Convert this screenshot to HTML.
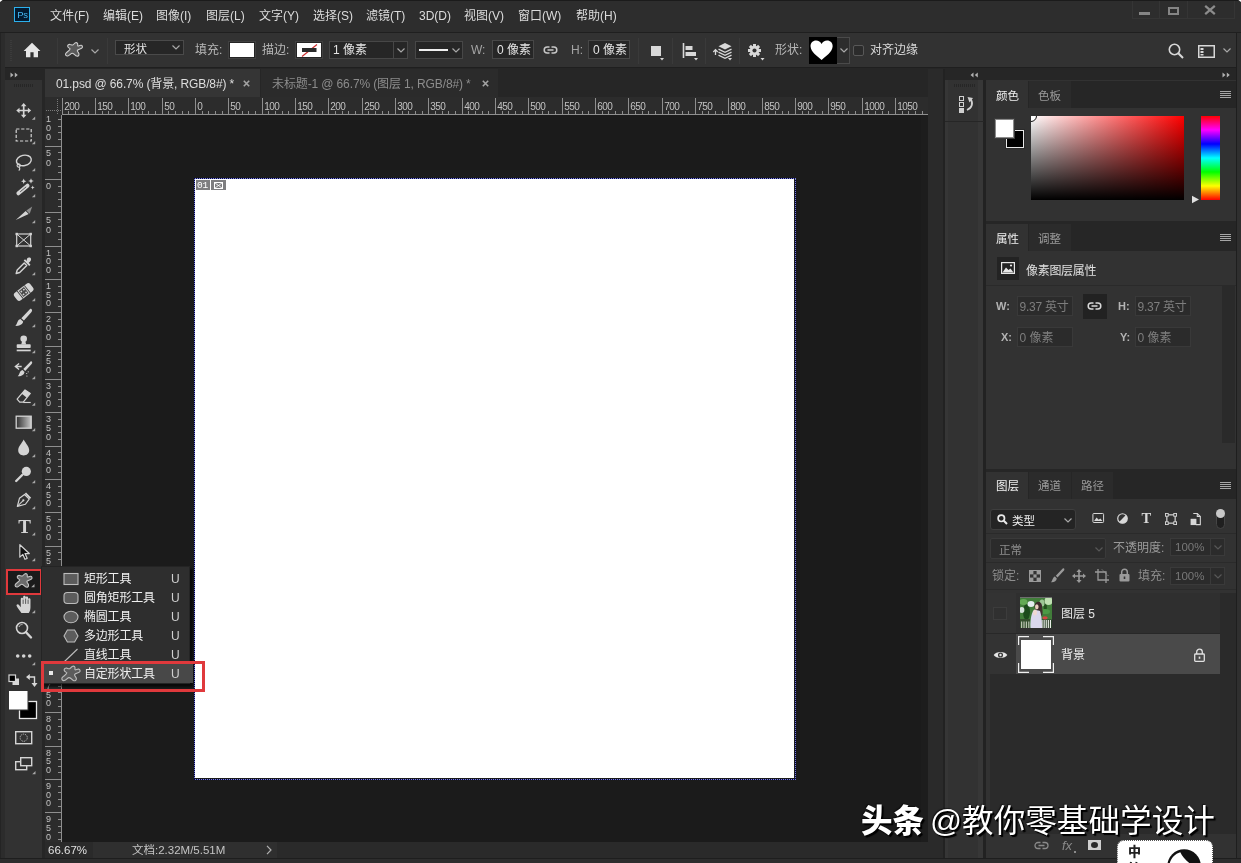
<!DOCTYPE html>
<html lang="zh-CN">
<head>
<meta charset="utf-8">
<title>Photoshop</title>
<style>
*{box-sizing:border-box;margin:0;padding:0}
html,body{width:1241px;height:863px;overflow:hidden;background:#262626}
body{position:relative;font-family:"Liberation Sans","Noto Sans CJK SC",sans-serif;font-size:12px;color:#d6d6d6;line-height:1}
.a{position:absolute}
.t{position:absolute;white-space:nowrap;line-height:16px;height:16px}
svg{position:absolute;overflow:visible}
/* frame */
#menubar{left:0;top:0;width:1241px;height:33px;background:#2d2d2d;border-top:1px solid #1b1b1b;border-bottom:1px solid #1f1f1f}
#optbar{left:5px;top:33px;width:1231px;height:35px;background:#323232;border-bottom:1px solid #1f1f1f}
#leftedge{left:0;top:33px;width:5px;height:830px;background:#2c2c2c;border-left:1px solid #242424}
#rightedge{left:1236px;top:33px;width:5px;height:830px;background:#2f2f2f;border-left:1px solid #1e1e1e}
#bottomedge{left:0;top:858px;width:1241px;height:5px;background:#2d2d2d;border-top:1px solid #1e1e1e}
.menu{top:8px;color:#dcdcdc}
</style>
</head>
<body>
<div id="root" class="a" style="left:0;top:0;width:1241px;height:863px;overflow:hidden;will-change:transform">
<!-- ===== window frame ===== -->
<div class="a" id="menubar"></div>
<div class="a" id="leftedge"></div>
<div class="a" id="rightedge"></div>
<div class="a" id="optbar"></div>
<div class="a" id="bottomedge"></div>
<!-- menubar content -->
<!-- Ps logo -->
<div class="a" style="left:14px;top:7px;width:16px;height:15px;background:#021a30;border:1px solid #2cb0ec"></div>
<div class="t" style="left:17.300px;top:7px;font-size:9.500px;line-height:15px;height:15px;color:#45b4ee;letter-spacing:-0.500px">Ps</div>
<svg style="left:0;top:0" width="4" height="4" viewBox="0 0 4 4"><path d="M0 0 H2.600 L0 2 Z" fill="#fff"/></svg>
<svg style="left:1237px;top:0" width="4" height="4" viewBox="0 0 4 4"><path d="M4 0 H1.400 L4 2 Z" fill="#fff"/></svg>
<div class="t menu" style="left:50px">文件(F)</div>
<div class="t menu" style="left:103px">编辑(E)</div>
<div class="t menu" style="left:156px">图像(I)</div>
<div class="t menu" style="left:206px">图层(L)</div>
<div class="t menu" style="left:259px">文字(Y)</div>
<div class="t menu" style="left:313px">选择(S)</div>
<div class="t menu" style="left:366px">滤镜(T)</div>
<div class="t menu" style="left:419px">3D(D)</div>
<div class="t menu" style="left:464px">视图(V)</div>
<div class="t menu" style="left:518px">窗口(W)</div>
<div class="t menu" style="left:576px">帮助(H)</div>
<!-- window controls -->
<div class="a" style="left:1132px;top:1px;width:103px;height:18px;border:1px solid #353535;border-top:none"></div>
<div class="a" style="left:1159px;top:1px;width:1px;height:18px;background:#353535"></div>
<div class="a" style="left:1187px;top:1px;width:1px;height:18px;background:#353535"></div>
<div class="a" style="left:1139px;top:12px;width:11px;height:3px;background:#858585"></div>
<div class="a" style="left:1168px;top:7px;width:11px;height:8px;border:2px solid #858585"></div>
<svg style="left:1204px;top:5px" width="12" height="10" viewBox="0 0 12 10"><path d="M1.2 0.8 L10.8 9.2 M10.8 0.8 L1.2 9.2" stroke="#8c8c8c" stroke-width="2.2" fill="none"/></svg>

<!-- options bar content -->
<!-- gripper -->
<div class="a" style="left:10px;top:40px;width:2px;height:22px;background:repeating-linear-gradient(to bottom,#3b3b3b 0 1px,transparent 1px 2px)"></div>
<!-- home -->
<svg style="left:23px;top:42px" width="18" height="16" viewBox="0 0 18 16"><path d="M9 0.800 L0.600 9 H3 V15.300 H7.400 V10.300 H10.600 V15.300 H15 V9 H17.400 Z" fill="#e6e6e6"/></svg>
<div class="a" style="left:57px;top:38px;width:1px;height:26px;background:#3a3a3a"></div>
<!-- custom shape icon -->
<svg style="left:64px;top:41px" width="21" height="17" viewBox="0 0 21 17"><path id="blob" transform="translate(10.2,8.4) scale(0.88) translate(-10.2,-8.4)" d="M5.6 7.7 C4.6 6.8 3 6.4 2.8 4.8 C2.6 3.2 4.2 2.4 5.6 2.8 C6.8 3.1 7.6 3.6 8.6 3.4 C9.8 3.1 10.2 1.2 11.8 0.8 C13.6 0.4 14.4 1.8 14.2 3 C14.1 3.8 13.9 4.2 14.4 4.5 C15.2 4.9 16.6 3.4 18.2 3.8 C19.8 4.2 20 6.2 18.8 7 C17.4 7.9 14.6 8.2 13.8 9.5 C13.2 10.6 15.2 11.6 15.6 13.4 C16 15.4 14.4 16.4 13 16 C11.2 15.5 10.4 13 8 12.8 C6.4 12.7 5.2 15.4 3 15.8 C1 16.2 -0.2 14.600 0.6 13 C1.6 11 5.4 10 5.6 7.7 Z" fill="#5a5a5a" stroke="#d0d0d0" stroke-width="1.200"/></svg>
<svg style="left:91px;top:49px" width="8" height="5" viewBox="0 0 8 5"><path d="M0.5 0.5 L4 4 L7.5 0.5" stroke="#a8a8a8" stroke-width="1.2" fill="none"/></svg>
<div class="a" style="left:107px;top:38px;width:1px;height:26px;background:#3a3a3a"></div>
<!-- mode dropdown -->
<div class="a" style="left:115px;top:40px;width:69px;height:15px;background:#262626;border:1px solid #4a4a4a"></div>
<div class="t" style="left:124px;top:42px;color:#e4e4e4;line-height:15px;height:15px;font-size:11.500px">形状</div>
<svg style="left:172px;top:45px" width="8" height="5" viewBox="0 0 8 5"><path d="M0.5 0.5 L4 4 L7.5 0.5" stroke="#a8a8a8" stroke-width="1.2" fill="none"/></svg>
<div class="t" style="left:195px;top:42px;color:#b8b8b8">填充:</div>
<div class="a" style="left:228px;top:41px;width:28px;height:18px;background:#fff;border:2px solid #242424;outline:1px solid #404040;outline-offset:-1px"></div>
<div class="t" style="left:262px;top:42px;color:#b8b8b8">描边:</div>
<div class="a" style="left:295px;top:41px;width:28px;height:18px;background:#fff;border:2px solid #242424;outline:1px solid #404040;outline-offset:-1px"></div>
<svg style="left:298px;top:43px" width="23" height="14" viewBox="0 0 23 14"><path d="M4 13.500 L19 1.500" stroke="#cc3030" stroke-width="1.300"/><rect x="4" y="5" width="14.500" height="4" fill="#2a2a2a"/></svg>
<!-- stroke width -->
<div class="a" style="left:329px;top:41px;width:79px;height:18px;background:#262626;border:1px solid #474747"></div>
<div class="a" style="left:393px;top:42px;width:1px;height:16px;background:#474747"></div>
<div class="t" style="left:333px;top:42px;color:#e4e4e4">1 像素</div>
<svg style="left:397px;top:48px" width="8" height="5" viewBox="0 0 8 5"><path d="M0.5 0.5 L4 4 L7.5 0.5" stroke="#a8a8a8" stroke-width="1.2" fill="none"/></svg>
<!-- line style -->
<div class="a" style="left:415px;top:41px;width:48px;height:18px;background:#262626;border:1px solid #474747"></div>
<div class="a" style="left:419px;top:49px;width:29px;height:2px;background:#f0f0f0"></div>
<svg style="left:452px;top:48px" width="8" height="5" viewBox="0 0 8 5"><path d="M0.5 0.5 L4 4 L7.5 0.5" stroke="#a8a8a8" stroke-width="1.2" fill="none"/></svg>
<div class="t" style="left:471px;top:42px;color:#a4a4a4">W:</div>
<div class="a" style="left:492px;top:40px;width:42px;height:19px;background:#262626;border:1px solid #474747"></div>
<div class="t" style="left:497px;top:42px;color:#e4e4e4">0 像素</div>
<svg style="left:543px;top:45px" width="15" height="10" viewBox="0 0 15 10"><path d="M6.5 2 H4.2 A3 3 0 0 0 4.2 8 H6.5 M8.5 2 H10.8 A3 3 0 0 1 10.8 8 H8.5 M4.5 5 H10.5" stroke="#c8c8c8" stroke-width="1.5" fill="none"/></svg>
<div class="t" style="left:571px;top:42px;color:#a4a4a4">H:</div>
<div class="a" style="left:588px;top:40px;width:42px;height:19px;background:#262626;border:1px solid #474747"></div>
<div class="t" style="left:593px;top:42px;color:#e4e4e4">0 像素</div>
<div class="a" style="left:638px;top:38px;width:1px;height:26px;background:#3a3a3a"></div>
<!-- path ops -->
<div class="a" style="left:651px;top:46px;width:10px;height:10px;background:#d8d8d8"></div>
<svg style="left:660px;top:58px" width="4" height="3" viewBox="0 0 4 3"><path d="M0 0 H4 L2 2.6 Z" fill="#d8d8d8"/></svg>
<div class="a" style="left:672px;top:38px;width:1px;height:26px;background:#3a3a3a"></div>
<!-- align -->
<svg style="left:682px;top:43px" width="16" height="18" viewBox="0 0 16 18"><path d="M1.5 0 V15" stroke="#d8d8d8" stroke-width="1.6"/><rect x="3.5" y="3" width="7" height="4" fill="#d8d8d8"/><rect x="3.5" y="9" width="10.5" height="4" fill="#d8d8d8"/><path d="M12 15 H16 L14 17.6 Z" fill="#d8d8d8"/></svg>
<div class="a" style="left:705px;top:38px;width:1px;height:26px;background:#3a3a3a"></div>
<!-- arrange -->
<svg style="left:713px;top:42px" width="20" height="19" viewBox="0 0 20 19"><path d="M2.5 13 V8 M0.3 10 L2.5 7.6 L4.7 10" stroke="#d8d8d8" stroke-width="1.3" fill="none"/><path d="M12 1 L18.5 4.2 L12 7.4 L5.5 4.2 Z" fill="#d8d8d8"/><path d="M5.5 7.2 L12 10.4 L18.5 7.2 M5.5 10.2 L12 13.4 L18.5 10.2 M5.5 13.2 L12 16.4 L18.5 13.2" stroke="#d8d8d8" stroke-width="1.3" fill="none"/><path d="M15 16 H19 L17 18.6 Z" fill="#d8d8d8"/></svg>
<div class="a" style="left:739px;top:38px;width:1px;height:26px;background:#3a3a3a"></div>
<!-- gear -->
<svg style="left:747px;top:43px" width="18" height="18" viewBox="0 0 18 18"><g transform="translate(7.5,7.5) scale(0.930)"><g fill="#d8d8d8"><rect x="-1.6" y="-7" width="3.2" height="14"/><rect x="-1.6" y="-7" width="3.2" height="14" transform="rotate(45)"/><rect x="-1.6" y="-7" width="3.2" height="14" transform="rotate(90)"/><rect x="-1.6" y="-7" width="3.2" height="14" transform="rotate(135)"/><circle r="5"/></g><circle r="2.2" fill="#323232"/></g><path d="M13.5 15 H17.5 L15.5 17.6 Z" fill="#d8d8d8"/></svg>
<div class="t" style="left:775px;top:42px;color:#b8b8b8">形状:</div>
<div class="a" style="left:809px;top:37px;width:41px;height:27px;border:1px solid #4a4a4a;background:#2d2d2d"></div>
<div class="a" style="left:809px;top:37px;width:28px;height:27px;background:#000"></div>
<svg style="left:810.400px;top:39.800px" width="23.200" height="20.600" viewBox="0 0 25 22"><path d="M12.5 21.5 C8 17.5 1 13 0.6 7 C0.3 2.8 3.4 0.4 6.6 0.5 C9.2 0.6 11.4 2 12.5 4.2 C13.6 2 15.8 0.6 18.4 0.5 C21.6 0.4 24.7 2.8 24.4 7 C24 13 17 17.5 12.5 21.5 Z" fill="#fff"/></svg>
<svg style="left:840px;top:48px" width="8" height="5" viewBox="0 0 8 5"><path d="M0.5 0.5 L4 4 L7.5 0.5" stroke="#a8a8a8" stroke-width="1.2" fill="none"/></svg>
<div class="a" style="left:853px;top:45px;width:11px;height:11px;border:1px solid #585858;border-radius:2px;background:#2b2b2b"></div>
<div class="t" style="left:870px;top:42px;color:#d8d8d8">对齐边缘</div>
<!-- search -->
<svg style="left:1168px;top:43px" width="16" height="16" viewBox="0 0 16 16"><circle cx="6.5" cy="6.5" r="5.2" stroke="#d8d8d8" stroke-width="1.6" fill="none"/><path d="M10.3 10.3 L15 15" stroke="#d8d8d8" stroke-width="2"/></svg>
<svg style="left:1198px;top:45px" width="17" height="13" viewBox="0 0 17 13"><rect x="0.75" y="0.75" width="15.5" height="11.5" stroke="#d8d8d8" stroke-width="1.5" fill="none"/><rect x="2.5" y="3" width="3" height="2" fill="#d8d8d8"/><rect x="2.5" y="6" width="3" height="2" fill="#d8d8d8"/><rect x="2.5" y="9" width="3" height="1.5" fill="#d8d8d8"/></svg>
<svg style="left:1223px;top:48px" width="8" height="5" viewBox="0 0 8 5"><path d="M0.5 0.5 L4 4 L7.5 0.5" stroke="#a8a8a8" stroke-width="1.2" fill="none"/></svg>

<!-- toolbar -->
<div class="a" style="left:5px;top:69px;width:37px;height:789px;background:#323232"></div>
<div class="a" style="left:5px;top:69px;width:37px;height:11px;background:#262626"></div>
<svg style="left:10px;top:72px" width="9" height="6" viewBox="0 0 9 6"><path d="M0.5 0.5 L3.5 3 L0.5 5.5 Z M4.8 0.5 L7.8 3 L4.8 5.5 Z" fill="#b0b0b0"/></svg>
<div class="a" style="left:14px;top:84px;width:20px;height:3px;background:repeating-linear-gradient(to right,#262626 0 1px,transparent 1px 2px)"></div>
<!-- selected tool bg + red annotation -->
<div class="a" style="left:6px;top:568.500px;width:36px;height:26px;background:#1b1b1b;border:2.800px solid #e0393c"></div>
<svg style="left:0;top:0" width="45" height="863" viewBox="0 0 45 863">
<g transform="translate(23.7,110.5)"><path transform="scale(0.93)" d="M0 -8 L3 -4.5 H0.9 V-0.9 H4.5 V-3 L8 0 L4.5 3 V0.9 H0.9 V4.5 H3 L0 8 L-3 4.5 H-0.9 V0.9 H-4.5 V3 L-8 0 L-4.5 -3 V-0.9 H-0.9 V-4.5 H-3 Z" fill="#d4d4d4"/><path d="M11.5 6 V9.3 H8.2 Z" fill="#a8a8a8"/></g>
<g transform="translate(23.7,135)"><rect x="-7.5" y="-6" width="15" height="12" fill="none" stroke="#d4d4d4" stroke-width="1.200" stroke-dasharray="3.200 1.800"/><path d="M11.5 6 V9.3 H8.2 Z" fill="#a8a8a8"/></g>
<g transform="translate(23.7,162)"><ellipse cx="0.5" cy="-1.5" rx="7.5" ry="5.2" fill="none" stroke="#d4d4d4" stroke-width="1.4" transform="rotate(-12)"/><circle cx="-5" cy="3.5" r="1.6" fill="none" stroke="#d4d4d4" stroke-width="1.1"/><path d="M-4.5 5 C-3.5 6.5 -4 8 -5 8.5" fill="none" stroke="#d4d4d4" stroke-width="1.2"/><path d="M11.5 6 V9.3 H8.2 Z" fill="#a8a8a8"/></g>
<g transform="translate(23.7,188)"><path d="M-5.300 5.300 L3.800 -2.300" stroke="#d4d4d4" stroke-width="4" stroke-linecap="round"/><path d="M-3.500 3.800 L2.500 -1.200" stroke="#323232" stroke-width="0.800"/><path d="M0 -9.500 L0.800 -7.600 L2.700 -6.800 L0.800 -6 L0 -4.100 L-0.800 -6 L-2.700 -6.800 L-0.800 -7.600 Z M7.300 -9.800 L8.100 -7.800 L10.100 -7 L8.100 -6.200 L7.300 -4.200 L6.500 -6.200 L4.500 -7 L6.500 -7.800 Z M9 -2.500 L9.600 -1.100 L11 -0.500 L9.600 0.100 L9 1.500 L8.400 0.100 L7 -0.500 L8.400 -1.100 Z" fill="#d4d4d4"/><path d="M11.5 6 V9.3 H8.2 Z" fill="#a8a8a8"/></g>
<g transform="translate(23.7,214)"><path d="M-8 6 L2 -3 L5 0 Z" fill="#d4d4d4"/><path d="M2.6 -3.6 L8.5 -7.5 L6 -0.2 Z" fill="#8c8c8c"/><path d="M11.5 6 V9.3 H8.2 Z" fill="#a8a8a8"/></g>
<g transform="translate(23.7,240)"><rect x="-7" y="-6" width="14" height="12" fill="none" stroke="#d4d4d4" stroke-width="1.200"/><path d="M-7 -6 L7 6 M7 -6 L-7 6" stroke="#d4d4d4" stroke-width="1"/><g fill="#d4d4d4"><rect x="-8.200" y="-7.200" width="2.400" height="2.400"/><rect x="5.800" y="-7.200" width="2.400" height="2.400"/><rect x="-8.200" y="4.800" width="2.400" height="2.400"/><rect x="5.800" y="4.800" width="2.400" height="2.400"/></g></g>
<g transform="translate(23.7,266)"><path d="M-7.5 7.5 L-6.5 4 L0.5 -3 L3 -0.5 L-4 6.5 Z" fill="none" stroke="#d4d4d4" stroke-width="1.4" stroke-linejoin="round"/><path d="M0 -5.5 L5.5 0 L6.8 -1.3 L5 -3.2 C8 -5 8 -8 6 -8.5 C4 -9 2.5 -7 3.2 -5 L1.3 -6.8 Z" fill="#d4d4d4"/><path d="M11.5 6 V9.3 H8.2 Z" fill="#a8a8a8"/></g>
<g transform="translate(23.7,292)"><g transform="rotate(-38)"><rect x="-10" y="-4.800" width="20" height="9.600" rx="2.600" fill="#d4d4d4"/><rect x="-5" y="-4.800" width="10" height="9.600" fill="#323232"/><rect x="-4.200" y="-4.800" width="8.400" height="9.600" fill="#d4d4d4"/><rect x="-3.200" y="-3.700" width="6.400" height="7.400" fill="#484848"/><circle cx="-1.600" cy="-1.800" r="0.900" fill="#d4d4d4"/><circle cx="1.600" cy="-1.800" r="0.900" fill="#d4d4d4"/><circle cx="-1.600" cy="1.800" r="0.900" fill="#d4d4d4"/><circle cx="1.600" cy="1.800" r="0.900" fill="#d4d4d4"/></g><path d="M11.5 6 V9.3 H8.2 Z" fill="#a8a8a8"/></g>
<g transform="translate(23.7,318)"><path d="M7.600 -9 C8.900 -8 8.500 -6.800 7.400 -5.600 L0.200 2.600 L-2.400 0.200 L5.200 -7.800 C6 -8.700 6.800 -9.600 7.600 -9 Z" fill="#d4d4d4"/><path d="M-3.300 1 L-0.600 3.600 C-0.800 6.400 -4.400 8.400 -8.400 7.800 C-6.200 6.200 -6.400 1.600 -3.300 1 Z" fill="#d4d4d4"/><path d="M11.5 6 V9.3 H8.2 Z" fill="#a8a8a8"/></g>
<g transform="translate(23.7,344)"><circle cx="0" cy="-5.200" r="3.300" fill="#d4d4d4"/><path d="M-1.600 -3 H1.600 L2.400 0.500 H-2.400 Z" fill="#d4d4d4"/><rect x="-7" y="0.300" width="14" height="3.700" rx="0.800" fill="#d4d4d4"/><rect x="-7" y="5.600" width="14" height="1.700" fill="#d4d4d4"/><path d="M11.5 6 V9.3 H8.2 Z" fill="#a8a8a8"/></g>
<g transform="translate(23.7,370)"><path d="M8 -8.5 C9 -7.5 8.4 -6.6 7.5 -5.6 L1.5 1 L-0.4 -0.9 L6 -7.6 C6.7 -8.4 7.3 -9 8 -8.5 Z" fill="#d4d4d4"/><path d="M-1.2 0 L0.8 2 C0.6 4.5 -2.5 6.8 -6 6.3 C-4 4.8 -4.2 0.6 -1.2 0 Z" fill="#d4d4d4"/><path d="M-8 -3.5 H-2 M-4.6 -6.5 L-8.3 -3.5 L-4.6 -0.5" stroke="#d4d4d4" stroke-width="1.4" fill="none"/><circle cx="3" cy="3.5" r="0.6" fill="#d4d4d4"/><circle cx="4.5" cy="1.8" r="0.6" fill="#d4d4d4"/><circle cx="3.2" cy="6" r="0.6" fill="#d4d4d4"/><path d="M11.5 6 V9.3 H8.2 Z" fill="#a8a8a8"/></g>
<g transform="translate(23.7,396.5)"><g transform="scale(0.880)"><path d="M-7.5 3 L1.5 -7.5 L7.5 -3.5 L-0.5 6.5 H-4.5 Z" fill="none" stroke="#d4d4d4" stroke-width="1.4" stroke-linejoin="round"/><path d="M-2.2 -3.2 L1.5 -7.5 L7.5 -3.5 L3.6 1.4 Z" fill="#d4d4d4"/><path d="M-0.5 6.8 H8" stroke="#d4d4d4" stroke-width="1.3"/></g><path d="M11.5 6 V9.3 H8.2 Z" fill="#a8a8a8"/></g>
<g transform="translate(23.7,422)"><defs><linearGradient id="gg" x1="0" x2="1" y1="0" y2="0"><stop offset="0" stop-color="#303030"/><stop offset="1" stop-color="#c8c8c8"/></linearGradient></defs><rect x="-7.500" y="-5.800" width="15" height="12" fill="url(#gg)" stroke="#d4d4d4" stroke-width="1.300"/><path d="M11.5 6 V9.3 H8.2 Z" fill="#a8a8a8"/></g>
<g transform="translate(23.7,448)"><path d="M0 -8.5 C2 -4.5 5.5 -1.5 5.5 2.3 C5.5 5.5 3 7.5 0 7.5 C-3 7.5 -5.5 5.5 -5.5 2.3 C-5.5 -1.5 -2 -4.5 0 -8.5 Z" fill="#d4d4d4"/><path d="M11.5 6 V9.3 H8.2 Z" fill="#a8a8a8"/></g>
<g transform="translate(23.7,474)"><circle cx="2.600" cy="-2.600" r="4.600" fill="#d4d4d4"/><path d="M-1.5 1 L-7.5 7" stroke="#d4d4d4" stroke-width="2.4" stroke-linecap="round"/><path d="M11.5 6 V9.3 H8.2 Z" fill="#a8a8a8"/></g>
<g transform="translate(23.7,500)"><g transform="scale(0.85)"><path d="M-7.5 7.5 L-5 -2 L1 -6.5 L6.5 -1 L2 5 Z" fill="none" stroke="#d4d4d4" stroke-width="1.4" stroke-linejoin="round"/><path d="M-7 7 L-1 1" stroke="#d4d4d4" stroke-width="1.2"/><circle cx="-0.4" cy="0.4" r="1.3" fill="#d4d4d4"/><path d="M2 -8 L8 -2" stroke="#d4d4d4" stroke-width="2.2"/></g><path d="M11.5 6 V9.3 H8.2 Z" fill="#a8a8a8"/></g>
<g transform="translate(23.7,526.3)"><text x="0.800" y="6.300" text-anchor="middle" font-family="Liberation Serif, serif" font-weight="bold" font-size="19" fill="#d4d4d4">T</text><path d="M11.5 6 V9.3 H8.2 Z" fill="#a8a8a8"/></g>
<g transform="translate(23.7,552)"><g transform="scale(0.86)"><path d="M-4.5 -8.5 V6 L-1 2.8 L1.5 8.5 L4 7.4 L1.5 1.8 H6.5 Z" fill="#111" stroke="#d4d4d4" stroke-width="1.4" stroke-linejoin="round"/></g><path d="M11.5 6 V9.3 H8.2 Z" fill="#a8a8a8"/></g>
<g transform="translate(14.800,573) scale(0.880)"><path d="M5.6 7.7 C4.6 6.8 3 6.4 2.8 4.8 C2.6 3.2 4.2 2.4 5.6 2.8 C6.8 3.1 7.6 3.6 8.6 3.4 C9.8 3.1 10.2 1.2 11.8 0.8 C13.6 0.4 14.4 1.8 14.2 3 C14.1 3.8 13.9 4.2 14.4 4.5 C15.2 4.9 16.6 3.4 18.2 3.8 C19.8 4.2 20 6.2 18.8 7 C17.4 7.9 14.6 8.2 13.8 9.5 C13.2 10.6 15.2 11.6 15.6 13.4 C16 15.4 14.4 16.4 13 16 C11.2 15.5 10.4 13 8 12.8 C6.4 12.7 5.2 15.4 3 15.8 C1 16.2 -0.2 14.600 0.6 13 C1.6 11 5.4 10 5.6 7.7 Z" fill="#6a6a6a" stroke="#c8c8c8" stroke-width="1.2"/></g>
<path d="M34.5 584 V587.3 H31.2 Z" fill="#a8a8a8"/>
<!-- hand -->
<g transform="translate(25.3,605) scale(1.08)"><path d="M-3.6 7.5 C-5 5.5 -7 3 -8 1 C-8.6 -0.4 -7 -1.4 -6 -0.2 L-4.2 2 V-5.5 C-4.2 -7.2 -2 -7.2 -2 -5.5 V-7.3 C-2 -9 0.3 -9 0.3 -7.3 V-6.5 C0.3 -8.2 2.6 -8.2 2.6 -6.5 V-5 C2.6 -6.6 4.8 -6.6 4.8 -5 V2 C4.8 4.5 4 6 3.2 7.5 Z" fill="#d4d4d4"/><path d="M-2 -5 V-1 M0.3 -6 V-1 M2.6 -5 V-1" stroke="#323232" stroke-width="0.7"/></g><g transform="translate(23.7,604)"><path d="M11.5 6 V9.3 H8.2 Z" fill="#a8a8a8"/></g>
<!-- zoom -->
<g transform="translate(23.5,630)"><circle cx="-1.5" cy="-2" r="5.5" fill="none" stroke="#d4d4d4" stroke-width="1.6"/><path d="M2.5 2.2 L7.5 7.5" stroke="#d4d4d4" stroke-width="2.4" stroke-linecap="round"/><path d="M-4.5 -3 C-4 -4.8 -2.5 -5.6 -1 -5.4" stroke="#d4d4d4" stroke-width="0.9" fill="none"/></g>
<!-- dots -->
<g transform="translate(23.7,656)"><circle cx="-6" cy="0" r="1.8" fill="#d4d4d4"/><circle cx="0" cy="0" r="1.8" fill="#d4d4d4"/><circle cx="6" cy="0" r="1.8" fill="#d4d4d4"/><path d="M11.5 6 V9.3 H8.2 Z" fill="#a8a8a8"/></g>
<!-- default colors mini -->
<rect x="12.5" y="678.5" width="6.5" height="6.5" fill="#d8d8d8"/><rect x="9" y="675" width="6.5" height="6.5" fill="#000" stroke="#d8d8d8" stroke-width="1.2"/>
<!-- swap arrows -->
<path d="M29 677 H34.5 V684" stroke="#d8d8d8" stroke-width="1.4" fill="none"/><path d="M29.8 674 L26 677 L29.8 680 Z M31.5 683 L34.5 687 L37.5 683 Z" fill="#d8d8d8"/>
<!-- fg/bg -->
<rect x="19.5" y="701.500" width="17" height="17" fill="#000" stroke="#e8e8e8" stroke-width="1.3"/>
<rect x="8.5" y="690.5" width="19.500" height="19.500" fill="#fff" stroke="#323232" stroke-width="1"/>
<!-- quick mask -->
<rect x="15.7" y="731.7" width="16" height="12" fill="none" stroke="#d4d4d4" stroke-width="1.4"/><circle cx="23.700" cy="737.700" r="3.600" fill="none" stroke="#d4d4d4" stroke-width="1" stroke-dasharray="1 1"/>
<!-- screen mode -->
<rect x="15.7" y="761.700" width="11" height="8" fill="none" stroke="#d4d4d4" stroke-width="1.4"/><rect x="20.700" y="757.700" width="11" height="8" fill="#323232" stroke="#d4d4d4" stroke-width="1.4"/><path d="M35.5 771 V774.3 H32.2 Z" fill="#a8a8a8"/>
</svg>
<!-- document area -->
<!-- tab bar -->
<div class="a" style="left:45px;top:69px;width:883px;height:28px;background:#262626"></div>
<div class="a" style="left:45px;top:69px;width:215px;height:28px;background:#353535"></div>
<div class="a" style="left:261px;top:69px;width:237px;height:28px;background:#2b2b2b"></div>
<div class="t" style="left:56px;top:76px;color:#dedede;letter-spacing:-0.12px">01.psd @ 66.7% (背景, RGB/8#) *</div>
<svg style="left:243px;top:80px" width="7" height="7" viewBox="0 0 7 7"><path d="M0.8 0.8 L6.2 6.2 M6.2 0.8 L0.8 6.2" stroke="#a4a4a4" stroke-width="1.6"/></svg>
<div class="t" style="left:272px;top:76px;color:#8c8c8c;letter-spacing:-0.12px">未标题-1 @ 66.7% (图层 1, RGB/8#) *</div>
<svg style="left:482px;top:80px" width="7" height="7" viewBox="0 0 7 7"><path d="M0.8 0.8 L6.2 6.2 M6.2 0.8 L0.8 6.2" stroke="#a4a4a4" stroke-width="1.6"/></svg>
<!-- canvas bg -->
<div class="a" style="left:45px;top:97px;width:883px;height:745px;background:#1b1b1b"></div>
<div class="a" style="left:921px;top:115px;width:7px;height:727px;background:#1d1d1d"></div>
<!-- rulers -->
<div class="a" style="left:45px;top:97px;width:883px;height:18px;background:#2c2c2c"></div>
<div class="a" style="left:45px;top:97px;width:17px;height:745px;background:#2c2c2c"></div>
<svg style="left:0;top:0;font-family:'Liberation Sans',sans-serif;font-size:9px" width="930" height="863" viewBox="0 0 930 863" fill="#c2c2c2">
<path d="M62 114.5 H928 M61.5 115 V842" stroke="#8e8e8e" stroke-width="1" fill="none"/>
<path d="M62.5 98 V115 M68.5 111 V114 M75.5 111 V114 M82.5 111 V114 M88.5 111 V114 M95.5 98 V115 M102.5 111 V114 M108.5 111 V114 M115.5 111 V114 M122.5 111 V114 M128.5 98 V115 M135.5 111 V114 M142.5 111 V114 M148.5 111 V114 M155.5 111 V114 M162.5 98 V115 M168.5 111 V114 M175.5 111 V114 M182.5 111 V114 M188.5 111 V114 M195.5 98 V115 M202.5 111 V114 M208.5 111 V114 M215.5 111 V114 M222.5 111 V114 M228.5 98 V115 M235.5 111 V114 M242.5 111 V114 M248.5 111 V114 M255.5 111 V114 M262.5 98 V115 M268.5 111 V114 M275.5 111 V114 M282.5 111 V114 M288.5 111 V114 M295.5 98 V115 M302.5 111 V114 M308.5 111 V114 M315.5 111 V114 M322.5 111 V114 M328.5 98 V115 M335.5 111 V114 M342.5 111 V114 M348.5 111 V114 M355.5 111 V114 M362.5 98 V115 M368.5 111 V114 M375.5 111 V114 M382.5 111 V114 M388.5 111 V114 M395.5 98 V115 M402.5 111 V114 M408.5 111 V114 M415.5 111 V114 M422.5 111 V114 M428.5 98 V115 M435.5 111 V114 M442.5 111 V114 M448.5 111 V114 M455.5 111 V114 M462.5 98 V115 M468.5 111 V114 M475.5 111 V114 M482.5 111 V114 M488.5 111 V114 M495.5 98 V115 M502.5 111 V114 M508.5 111 V114 M515.5 111 V114 M522.5 111 V114 M528.5 98 V115 M535.5 111 V114 M542.5 111 V114 M548.5 111 V114 M555.5 111 V114 M562.5 98 V115 M568.5 111 V114 M575.5 111 V114 M582.5 111 V114 M588.5 111 V114 M595.5 98 V115 M602.5 111 V114 M608.5 111 V114 M615.5 111 V114 M622.5 111 V114 M628.5 98 V115 M635.5 111 V114 M642.5 111 V114 M648.5 111 V114 M655.5 111 V114 M662.5 98 V115 M668.5 111 V114 M675.5 111 V114 M682.5 111 V114 M688.5 111 V114 M695.5 98 V115 M702.5 111 V114 M708.5 111 V114 M715.5 111 V114 M722.5 111 V114 M728.5 98 V115 M735.5 111 V114 M742.5 111 V114 M748.5 111 V114 M755.5 111 V114 M762.5 98 V115 M768.5 111 V114 M775.5 111 V114 M782.5 111 V114 M788.5 111 V114 M795.5 98 V115 M802.5 111 V114 M808.5 111 V114 M815.5 111 V114 M822.5 111 V114 M828.5 98 V115 M835.5 111 V114 M842.5 111 V114 M848.5 111 V114 M855.5 111 V114 M862.5 98 V115 M868.5 111 V114 M875.5 111 V114 M882.5 111 V114 M888.5 111 V114 M895.5 98 V115 M902.5 111 V114 M908.5 111 V114 M915.5 111 V114 M922.5 111 V114" stroke="#8e8e8e" stroke-width="1" fill="none"/>
<path d="M58 119.5 H61 M58 126.5 H61 M58 132.5 H61 M58 139.5 H61 M45 146.5 H62 M58 152.5 H61 M58 159.5 H61 M58 166.5 H61 M58 172.5 H61 M45 179.5 H62 M58 186.5 H61 M58 192.5 H61 M58 199.5 H61 M58 206.5 H61 M45 212.5 H62 M58 219.5 H61 M58 226.5 H61 M58 232.5 H61 M58 239.5 H61 M45 246.5 H62 M58 252.5 H61 M58 259.5 H61 M58 266.5 H61 M58 272.5 H61 M45 279.5 H62 M58 286.5 H61 M58 292.5 H61 M58 299.5 H61 M58 306.5 H61 M45 312.5 H62 M58 319.5 H61 M58 326.5 H61 M58 332.5 H61 M58 339.5 H61 M45 346.5 H62 M58 352.5 H61 M58 359.5 H61 M58 366.5 H61 M58 372.5 H61 M45 379.5 H62 M58 386.5 H61 M58 392.5 H61 M58 399.5 H61 M58 406.5 H61 M45 412.5 H62 M58 419.5 H61 M58 426.5 H61 M58 432.5 H61 M58 439.5 H61 M45 446.5 H62 M58 452.5 H61 M58 459.5 H61 M58 466.5 H61 M58 472.5 H61 M45 479.5 H62 M58 486.5 H61 M58 492.5 H61 M58 499.5 H61 M58 506.5 H61 M45 512.5 H62 M58 519.5 H61 M58 526.5 H61 M58 532.5 H61 M58 539.5 H61 M45 546.5 H62 M58 552.5 H61 M58 559.5 H61 M58 566.5 H61 M58 572.5 H61 M45 579.5 H62 M58 586.5 H61 M58 592.5 H61 M58 599.5 H61 M58 606.5 H61 M45 612.5 H62 M58 619.5 H61 M58 626.5 H61 M58 632.5 H61 M58 639.5 H61 M45 646.5 H62 M58 652.5 H61 M58 659.5 H61 M58 666.5 H61 M58 672.5 H61 M45 679.5 H62 M58 686.5 H61 M58 692.5 H61 M58 699.5 H61 M58 706.5 H61 M45 712.5 H62 M58 719.5 H61 M58 726.5 H61 M58 732.5 H61 M58 739.5 H61 M45 746.5 H62 M58 752.5 H61 M58 759.5 H61 M58 766.5 H61 M58 772.5 H61 M45 779.5 H62 M58 786.5 H61 M58 792.5 H61 M58 799.5 H61 M58 806.5 H61 M45 812.5 H62 M58 819.5 H61 M58 826.5 H61 M58 832.5 H61 M58 839.5 H61" stroke="#8e8e8e" stroke-width="1" fill="none"/>
<path d="M46 110.500 H61 M57.500 99 V114" stroke="#7a7a7a" stroke-width="1" stroke-dasharray="1 1" fill="none"/>
<text x="64.2" y="110" style="font-size:10px;letter-spacing:-0.55px">200</text><text x="97.2" y="110" style="font-size:10px;letter-spacing:-0.55px">150</text><text x="130.2" y="110" style="font-size:10px;letter-spacing:-0.55px">100</text><text x="164.2" y="110" style="font-size:10px;letter-spacing:-0.55px">50</text><text x="197.2" y="110" style="font-size:10px;letter-spacing:-0.55px">0</text><text x="230.2" y="110" style="font-size:10px;letter-spacing:-0.55px">50</text><text x="264.2" y="110" style="font-size:10px;letter-spacing:-0.55px">100</text><text x="297.2" y="110" style="font-size:10px;letter-spacing:-0.55px">150</text><text x="330.2" y="110" style="font-size:10px;letter-spacing:-0.55px">200</text><text x="364.2" y="110" style="font-size:10px;letter-spacing:-0.55px">250</text><text x="397.2" y="110" style="font-size:10px;letter-spacing:-0.55px">300</text><text x="430.2" y="110" style="font-size:10px;letter-spacing:-0.55px">350</text><text x="464.2" y="110" style="font-size:10px;letter-spacing:-0.55px">400</text><text x="497.2" y="110" style="font-size:10px;letter-spacing:-0.55px">450</text><text x="530.2" y="110" style="font-size:10px;letter-spacing:-0.55px">500</text><text x="564.2" y="110" style="font-size:10px;letter-spacing:-0.55px">550</text><text x="597.2" y="110" style="font-size:10px;letter-spacing:-0.55px">600</text><text x="630.2" y="110" style="font-size:10px;letter-spacing:-0.55px">650</text><text x="664.2" y="110" style="font-size:10px;letter-spacing:-0.55px">700</text><text x="697.2" y="110" style="font-size:10px;letter-spacing:-0.55px">750</text><text x="730.2" y="110" style="font-size:10px;letter-spacing:-0.55px">800</text><text x="764.2" y="110" style="font-size:10px;letter-spacing:-0.55px">850</text><text x="797.2" y="110" style="font-size:10px;letter-spacing:-0.55px">900</text><text x="830.2" y="110" style="font-size:10px;letter-spacing:-0.55px">950</text><text x="864.2" y="110" style="font-size:10px;letter-spacing:-0.55px">1000</text><text x="897.2" y="110" style="font-size:10px;letter-spacing:-0.55px">1050</text>
<text x="46" y="122.1">1</text><text x="46" y="130.8">0</text><text x="46" y="139.5">0</text><text x="46" y="155.9">5</text><text x="46" y="166.3">0</text><text x="46" y="189.2">0</text><text x="46" y="222.5">5</text><text x="46" y="232.9">0</text><text x="46" y="255.5">1</text><text x="46" y="264.2">0</text><text x="46" y="272.9">0</text><text x="46" y="288.8">1</text><text x="46" y="297.5">5</text><text x="46" y="306.2">0</text><text x="46" y="322.1">2</text><text x="46" y="330.8">0</text><text x="46" y="339.5">0</text><text x="46" y="355.5">2</text><text x="46" y="364.2">5</text><text x="46" y="372.9">0</text><text x="46" y="388.8">3</text><text x="46" y="397.5">0</text><text x="46" y="406.2">0</text><text x="46" y="422.1">3</text><text x="46" y="430.8">5</text><text x="46" y="439.5">0</text><text x="46" y="455.5">4</text><text x="46" y="464.2">0</text><text x="46" y="472.9">0</text><text x="46" y="488.8">4</text><text x="46" y="497.5">5</text><text x="46" y="506.2">0</text><text x="46" y="522.1">5</text><text x="46" y="530.8">0</text><text x="46" y="539.5">0</text><text x="46" y="555.5">5</text><text x="46" y="564.2">5</text><text x="46" y="572.9">0</text><text x="46" y="588.8">6</text><text x="46" y="597.5">0</text><text x="46" y="606.2">0</text><text x="46" y="622.1">6</text><text x="46" y="630.8">5</text><text x="46" y="639.5">0</text><text x="46" y="655.5">7</text><text x="46" y="664.2">0</text><text x="46" y="672.9">0</text><text x="46" y="688.8">7</text><text x="46" y="697.5">5</text><text x="46" y="706.2">0</text><text x="46" y="722.1">8</text><text x="46" y="730.8">0</text><text x="46" y="739.5">0</text><text x="46" y="755.5">8</text><text x="46" y="764.2">5</text><text x="46" y="772.9">0</text><text x="46" y="788.8">9</text><text x="46" y="797.5">0</text><text x="46" y="806.2">0</text><text x="46" y="822.1">9</text><text x="46" y="830.8">5</text><text x="46" y="839.5">0</text>
</svg>
<!-- white document -->
<div class="a" style="left:195px;top:179px;width:599px;height:599px;background:#fff"></div><div class="a" style="left:194px;top:178px;width:1px;height:602px;background:repeating-linear-gradient(to bottom,#00004e 0 1px,#7d84cc 1px 2px)"></div><div class="a" style="left:795px;top:178px;width:1px;height:602px;background:repeating-linear-gradient(to bottom,#00004e 0 1px,#7d84cc 1px 2px)"></div><div class="a" style="left:194px;top:178px;width:602px;height:1px;background:repeating-linear-gradient(to right,#00004e 0 1px,#7d84cc 1px 2px)"></div><div class="a" style="left:194px;top:779px;width:602px;height:1px;background:repeating-linear-gradient(to right,#00004e 0 1px,#7d84cc 1px 2px)"></div>
<div class="a" style="left:195.500px;top:179.500px;width:14.500px;height:10px;background:#7e7e80"></div>
<div class="a" style="left:211px;top:179.500px;width:15px;height:10px;background:#7e7e80"></div>
<div class="t" style="left:197px;top:181px;font-family:'Liberation Mono',monospace;font-size:9.500px;line-height:10px;height:10px;color:#fff;letter-spacing:-0.200px">01</div>
<svg style="left:214px;top:181.500px" width="9" height="7" viewBox="0 0 9 7"><rect x="0.500" y="0.500" width="8" height="6" fill="none" stroke="#fff"/><path d="M1 1 L8 6 M8 1 L1 6" stroke="#fff" stroke-width="0.8"/></svg>
<!-- status bar -->
<div class="a" style="left:45px;top:842px;width:883px;height:16px;background:#2f2f2f"></div>
<div class="a" style="left:45px;top:842px;width:48px;height:16px;background:#2a2a2a"></div>
<div class="a" style="left:277px;top:842px;width:651px;height:16px;background:#2a2a2a"></div>
<div class="t" style="left:48px;top:842px;font-size:11.5px;color:#e0e0e0">66.67%</div>
<div class="t" style="left:132px;top:842px;font-size:11.5px;color:#c4c4c4">文档:2.32M/5.51M</div>
<svg style="left:266px;top:845px" width="6" height="10" viewBox="0 0 6 10"><path d="M1 0.800 L5 5 L1 9.200" stroke="#b0b0b0" stroke-width="1.2" fill="none"/></svg>
<!-- right panels -->
<!-- header strip -->
<div class="a" style="left:945px;top:69px;width:291px;height:11px;background:#262626"></div>
<svg style="left:970px;top:72px" width="9" height="6" viewBox="0 0 9 6"><path d="M3.5 0.5 L0.5 3 L3.5 5.5 Z M7.8 0.5 L4.8 3 L7.8 5.5 Z" fill="#b0b0b0"/></svg>
<svg style="left:1222px;top:72px" width="9" height="6" viewBox="0 0 9 6"><path d="M0.5 0.5 L3.5 3 L0.5 5.5 Z M4.8 0.5 L7.8 3 L4.8 5.5 Z" fill="#b0b0b0"/></svg>
<!-- collapsed icon column -->
<div class="a" style="left:928px;top:69px;width:15px;height:789px;background:#2a2a2a"></div>
<div class="a" style="left:943px;top:69px;width:2px;height:789px;background:#222"></div>
<div class="a" style="left:945px;top:80px;width:38px;height:778px;background:#323232;border-left:3px solid #363636;border-right:5px solid #373737"></div>
<div class="a" style="left:983px;top:80px;width:3px;height:778px;background:#222"></div>
<div class="a" style="left:954px;top:84px;width:21px;height:3px;background:repeating-linear-gradient(to right,#262626 0 1px,transparent 1px 2px)"></div>
<div class="a" style="left:945px;top:121px;width:39px;height:1px;background:#262626"></div>
<svg style="left:958px;top:95px" width="18" height="19" viewBox="0 0 18 19"><rect x="1.5" y="1.5" width="4" height="4" fill="none" stroke="#d0d0d0" stroke-width="1"/><rect x="1.5" y="7.500" width="4" height="4" fill="none" stroke="#d0d0d0" stroke-width="1"/><rect x="1" y="13" width="5" height="5" fill="#d0d0d0"/><path d="M9 15 C14 13 15.500 8 12.500 4" stroke="#d0d0d0" stroke-width="1.8" fill="none"/><path d="M9.500 2 L15 3 L11.500 7.500 Z" fill="#d0d0d0"/></svg>
<!-- ===== color panel ===== -->
<div class="a" style="left:986px;top:80px;width:250px;height:141px;background:#323232"></div>
<div class="a" style="left:986px;top:81px;width:250px;height:27px;background:#262626"></div><div class="a" style="left:986px;top:81px;width:42px;height:27px;background:#323232"></div><div class="t" style="left:996px;top:88px;color:#f0f0f0;font-size:11.5px">颜色</div><div class="a" style="left:1029px;top:81px;width:42px;height:27px;background:#2b2b2b"></div><div class="t" style="left:1038px;top:88px;color:#9a9a9a;font-size:11.5px">色板</div><div class="a" style="left:1220px;top:91px;width:11px;height:7px;background:repeating-linear-gradient(to bottom,#a6a6a6 0 1px,transparent 1px 2px)"></div>
<div class="a" style="left:1006px;top:130px;width:18px;height:18px;background:#000;border:1px solid #e8e8e8;outline:1px solid #2a2a2a"></div>
<div class="a" style="left:994px;top:118px;width:21px;height:21px;background:#fff;border:1px solid #3a3a3a;outline:1px solid #8a8a8a;outline-offset:-2px"></div>
<div class="a" style="left:1031px;top:116px;width:153px;height:84px;background:linear-gradient(to top,#000,rgba(0,0,0,0)),linear-gradient(to right,#fff,#f00)"></div>
<div class="a" style="left:1031px;top:116px;width:12px;height:12px;overflow:hidden"><div class="a" style="left:-6px;top:-6px;width:12px;height:12px;border-radius:50%;border:1.5px solid #111;background:#fff"></div></div>
<div class="a" style="left:1201px;top:116px;width:19px;height:84px;background:linear-gradient(to bottom,#f00 0%,#f0f 16.600%,#00f 33.300%,#0ff 50%,#0f0 66.600%,#ff0 83.300%,#f00 100%)"></div>
<svg style="left:1191px;top:195px" width="9" height="9" viewBox="0 0 9 9"><path d="M1 0.800 L8 4.500 L1 8.200 Z" fill="#e0e0e0"/></svg>
<!-- ===== properties panel ===== -->
<div class="a" style="left:986px;top:224px;width:250px;height:245px;background:#323232"></div>
<div class="a" style="left:986px;top:224px;width:250px;height:27px;background:#262626"></div><div class="a" style="left:986px;top:224px;width:42px;height:27px;background:#323232"></div><div class="t" style="left:996px;top:231px;color:#f0f0f0;font-size:11.5px">属性</div><div class="a" style="left:1029px;top:224px;width:42px;height:27px;background:#2b2b2b"></div><div class="t" style="left:1038px;top:231px;color:#9a9a9a;font-size:11.5px">调整</div><div class="a" style="left:1220px;top:234px;width:11px;height:7px;background:repeating-linear-gradient(to bottom,#a6a6a6 0 1px,transparent 1px 2px)"></div>
<div class="a" style="left:997px;top:257px;width:22px;height:23px;background:#232323"></div>
<svg style="left:1001px;top:262px" width="14" height="12" viewBox="0 0 14 12"><rect x="0.600" y="0.600" width="12.800" height="10.800" fill="none" stroke="#e8e8e8" stroke-width="1.200"/><path d="M1.500 10.500 L5 5.500 L7.500 8 L9.500 6.500 L12.500 10.500 Z" fill="#e8e8e8"/><circle cx="10" cy="3.500" r="1.100" fill="#e8e8e8"/></svg>
<div class="t" style="left:1026px;top:263px;color:#e0e0e0;letter-spacing:-0.3px">像素图层属性</div>
<div class="a" style="left:986px;top:285px;width:250px;height:1px;background:#2a2a2a"></div>
<div class="a" style="left:1222px;top:286px;width:13px;height:157px;background:#2a2a2a"></div>
<div class="t" style="left:996px;top:298px;color:#b4b4b4;font-weight:bold;font-size:11px">W:</div>
<div class="a" style="left:1017px;top:296px;width:56px;height:20px;background:#2b2b2b;border:1px solid #393939"></div>
<div class="t" style="left:1019.500px;top:299px;color:#7e7e7e;letter-spacing:-0.25px">9.37 英寸</div>
<div class="a" style="left:1083px;top:294px;width:24px;height:25px;background:#222"></div>
<svg style="left:1087px;top:301px" width="15" height="10" viewBox="0 0 15 10"><path d="M6.500 2 H4.200 A3 3 0 0 0 4.200 8 H6.500 M8.500 2 H10.800 A3 3 0 0 1 10.800 8 H8.500 M4.500 5 H10.500" stroke="#d8d8d8" stroke-width="1.500" fill="none"/></svg>
<div class="t" style="left:1118px;top:298px;color:#b4b4b4;font-weight:bold;font-size:11px">H:</div>
<div class="a" style="left:1135px;top:296px;width:56px;height:20px;background:#2b2b2b;border:1px solid #393939"></div>
<div class="t" style="left:1137.500px;top:299px;color:#7e7e7e;letter-spacing:-0.25px">9.37 英寸</div>
<div class="t" style="left:1001px;top:329px;color:#b4b4b4;font-weight:bold;font-size:11px">X:</div>
<div class="a" style="left:1017px;top:327px;width:56px;height:20px;background:#2b2b2b;border:1px solid #393939"></div>
<div class="t" style="left:1019.500px;top:330px;color:#7e7e7e">0 像素</div>
<div class="t" style="left:1120px;top:329px;color:#b4b4b4;font-weight:bold;font-size:11px">Y:</div>
<div class="a" style="left:1135px;top:327px;width:56px;height:20px;background:#2b2b2b;border:1px solid #393939"></div>
<div class="t" style="left:1137.500px;top:330px;color:#7e7e7e">0 像素</div>
<!-- ===== layers panel ===== -->
<div class="a" style="left:986px;top:472px;width:250px;height:386px;background:#323232"></div>
<div class="a" style="left:986px;top:472px;width:250px;height:27px;background:#262626"></div><div class="a" style="left:986px;top:472px;width:42px;height:27px;background:#323232"></div><div class="t" style="left:996px;top:478px;color:#f0f0f0;font-size:11.5px">图层</div><div class="a" style="left:1029px;top:472px;width:42px;height:27px;background:#2b2b2b"></div><div class="t" style="left:1038px;top:478px;color:#9a9a9a;font-size:11.5px">通道</div><div class="a" style="left:1072px;top:472px;width:41px;height:27px;background:#2b2b2b"></div><div class="t" style="left:1081px;top:478px;color:#9a9a9a;font-size:11.5px">路径</div><div class="a" style="left:1220px;top:482px;width:11px;height:7px;background:repeating-linear-gradient(to bottom,#a6a6a6 0 1px,transparent 1px 2px)"></div>
<div class="a" style="left:990px;top:593px;width:246px;height:241px;background:#2b2b2b"></div>
<!-- filter row -->
<div class="a" style="left:990px;top:509px;width:86px;height:21px;background:#242424;border:1px solid #3e3e3e;border-radius:3px"></div>
<svg style="left:997px;top:514px" width="11" height="11" viewBox="0 0 11 11"><circle cx="4.300" cy="4.300" r="3.200" stroke="#e8e8e8" stroke-width="1.700" fill="none"/><path d="M6.800 6.800 L10 10" stroke="#e8e8e8" stroke-width="2"/></svg>
<div class="t" style="left:1012px;top:513px;color:#f0f0f0;font-size:11.500px">类型</div>
<svg style="left:1064px;top:518px" width="8" height="5" viewBox="0 0 8 5"><path d="M0.5 0.5 L4 4 L7.5 0.5" stroke="#a8a8a8" stroke-width="1.2" fill="none"/></svg>
<svg style="left:1091.800px;top:513px" width="12.500" height="10" viewBox="0 0 14 12"><rect x="0.600" y="0.600" width="12.800" height="10.800" rx="1" fill="none" stroke="#d8d8d8" stroke-width="1.200"/><path d="M2 9.500 L5 5.500 L7.500 8 L9.500 6.500 L12 9.500 Z" fill="#d8d8d8"/></svg>
<svg style="left:1116.800px;top:513px" width="11" height="11" viewBox="0 0 12 12"><circle cx="6" cy="6" r="5.200" fill="none" stroke="#d8d8d8" stroke-width="1.300"/><path d="M2.300 9.700 A5.200 5.200 0 0 0 9.700 2.300 Z" fill="#d8d8d8"/></svg>
<div class="t" style="left:1141.500px;top:510px;font-family:'Liberation Serif',serif;font-weight:bold;font-size:14.500px;line-height:16px;height:16px;color:#d8d8d8">T</div>
<svg style="left:1164.600px;top:512.500px" width="12" height="12" viewBox="0 0 13 13"><rect x="2" y="2" width="9" height="9" fill="none" stroke="#d8d8d8" stroke-width="1.300"/><rect x="0.500" y="0.500" width="3" height="3" fill="#323232" stroke="#d8d8d8"/><rect x="9.500" y="0.500" width="3" height="3" fill="#323232" stroke="#d8d8d8"/><rect x="0.500" y="9.500" width="3" height="3" fill="#323232" stroke="#d8d8d8"/><rect x="9.500" y="9.500" width="3" height="3" fill="#323232" stroke="#d8d8d8"/></svg>
<svg style="left:1189.500px;top:512.500px" width="11" height="12.500" viewBox="0 0 12 14"><path d="M3.500 0.600 H8 L11.400 4 V13 H6.500" fill="none" stroke="#d8d8d8" stroke-width="1.200"/><path d="M8 0.600 V4 H11.400" fill="none" stroke="#d8d8d8" stroke-width="1.200"/><rect x="0.500" y="6.500" width="6.500" height="7" fill="#d8d8d8"/></svg>
<div class="a" style="left:1216px;top:510px;width:9px;height:19px;border-radius:5px;background:#1f1f1f;border:1px solid #454545"></div>
<div class="a" style="left:1216px;top:509px;width:9px;height:9px;border-radius:50%;background:#c8c8c8"></div>
<div class="a" style="left:986px;top:533px;width:250px;height:1px;background:#2a2a2a"></div>
<!-- blend row -->
<div class="a" style="left:990px;top:538px;width:116px;height:21px;background:#2b2b2b;border:1px solid #3a3a3a;border-radius:2px"></div>
<div class="t" style="left:999px;top:542px;color:#8e8e8e;font-size:11.500px">正常</div>
<svg style="left:1095px;top:547px" width="8" height="5" viewBox="0 0 8 5"><path d="M0.5 0.5 L4 4 L7.5 0.5" stroke="#575757" stroke-width="1.2" fill="none"/></svg>
<div class="t" style="left:1113px;top:540px;color:#9a9a9a">不透明度:</div>
<div class="a" style="left:1170px;top:538px;width:55px;height:18px;background:#2b2b2b;border:1px solid #3a3a3a"></div>
<div class="a" style="left:1210px;top:539px;width:1px;height:16px;background:#3a3a3a"></div>
<div class="t" style="left:1175px;top:539px;color:#787878;font-size:11.500px">100%</div>
<svg style="left:1214px;top:545px" width="8" height="5" viewBox="0 0 8 5"><path d="M0.5 0.5 L4 4 L7.5 0.5" stroke="#575757" stroke-width="1.2" fill="none"/></svg>
<div class="a" style="left:986px;top:562px;width:250px;height:1px;background:#2a2a2a"></div>
<!-- lock row -->
<div class="t" style="left:992px;top:568px;color:#8e8e8e">锁定:</div>
<svg style="left:1029px;top:570px" width="12" height="12" viewBox="0 0 12 12"><rect x="0.500" y="0.500" width="11" height="11" fill="none" stroke="#9a9a9a"/><rect x="1" y="1" width="3.400" height="3.400" fill="#9a9a9a"/><rect x="7.600" y="1" width="3.400" height="3.400" fill="#9a9a9a"/><rect x="4.400" y="4.400" width="3.200" height="3.200" fill="#9a9a9a"/><rect x="1" y="7.600" width="3.400" height="3.400" fill="#9a9a9a"/><rect x="7.600" y="7.600" width="3.400" height="3.400" fill="#9a9a9a"/></svg>
<svg style="left:1051px;top:568px" width="14" height="15" viewBox="0 0 14 15"><path d="M13 0.500 C13.800 1.300 13.300 2.200 12.500 3 L6.500 9.500 L4.800 7.800 L11 1.300 C11.700 0.500 12.300 0 13 0.500 Z" fill="#9a9a9a"/><path d="M4 8.600 L5.800 10.400 C5.600 12.800 3 14.600 0 14.200 C1.800 12.800 1.500 9.200 4 8.600 Z" fill="#9a9a9a"/></svg>
<svg style="left:1072px;top:569px" width="14" height="14" viewBox="0 0 14 14"><path d="M7 0 L9.600 3 H7.800 V6.200 H11 V4.400 L14 7 L11 9.600 V7.800 H7.800 V11 H9.600 L7 14 L4.400 11 H6.200 V7.800 H3 V9.600 L0 7 L3 4.400 V6.200 H6.200 V3 H4.400 Z" fill="#9a9a9a"/></svg>
<svg style="left:1095px;top:569px" width="14" height="14" viewBox="0 0 14 14"><path d="M3 0 V11 H14 M0 3 H11 V14" stroke="#9a9a9a" stroke-width="1.300" fill="none"/><path d="M7 0.500 L13.500 7" stroke="#9a9a9a" stroke-width="1" stroke-dasharray="1.500 1"/></svg>
<svg style="left:1119px;top:568px" width="11" height="14" viewBox="0 0 11 14"><path d="M2.700 6 V4 A2.800 2.800 0 0 1 8.300 4 V6" stroke="#9a9a9a" stroke-width="1.500" fill="none"/><rect x="0.500" y="6" width="10" height="7.500" rx="1" fill="#9a9a9a"/><rect x="4.700" y="8.500" width="1.600" height="2.500" fill="#323232"/></svg>
<div class="t" style="left:1138px;top:568px;color:#8e8e8e">填充:</div>
<div class="a" style="left:1170px;top:567px;width:55px;height:18px;background:#2b2b2b;border:1px solid #3a3a3a"></div>
<div class="a" style="left:1210px;top:568px;width:1px;height:16px;background:#3a3a3a"></div>
<div class="t" style="left:1175px;top:568px;color:#787878;font-size:11.500px">100%</div>
<svg style="left:1214px;top:574px" width="8" height="5" viewBox="0 0 8 5"><path d="M0.5 0.5 L4 4 L7.5 0.5" stroke="#575757" stroke-width="1.2" fill="none"/></svg>
<div class="a" style="left:986px;top:589px;width:250px;height:1px;background:#2b2b2b"></div>
<!-- layer rows -->
<div class="a" style="left:986px;top:593px;width:30px;height:81px;background:#333"></div>
<div class="a" style="left:1016px;top:593px;width:204px;height:40px;background:#2f2f2f"></div>
<div class="a" style="left:986px;top:633px;width:234px;height:1px;background:#282828"></div>
<div class="a" style="left:1016px;top:634px;width:204px;height:40px;background:#4a4a4a"></div>
<div class="a" style="left:1220px;top:593px;width:16px;height:241px;background:#2a2a2a"></div>
<div class="a" style="left:993px;top:607px;width:14px;height:13px;border:1px solid #3c3c3c;background:#303030"></div>
<!-- thumbnail photo -->
<svg style="left:1020px;top:597px" width="32" height="31" viewBox="0 0 32 31"><defs><filter id="tb" x="-10%" y="-10%" width="120%" height="120%"><feGaussianBlur stdDeviation="0.7"/></filter><clipPath id="tc"><rect width="32" height="31"/></clipPath></defs><g clip-path="url(#tc)"><rect width="32" height="31" fill="#417d3a"/><g filter="url(#tb)"><ellipse cx="6.5" cy="15" rx="3.5" ry="8" fill="#1f4c1e"/><ellipse cx="25.3" cy="9" rx="1.6" ry="7" fill="#23501f"/><ellipse cx="28.5" cy="4" rx="4" ry="4" fill="#bfe0b2"/><ellipse cx="3.5" cy="5" rx="4" ry="3" fill="#63aa55"/><ellipse cx="25" cy="14.5" rx="5" ry="2.6" fill="#4c9a45"/><ellipse cx="22" cy="6" rx="2.6" ry="3.5" fill="#9cc694"/><rect x="0" y="22" width="10" height="9" fill="#35502f"/><rect x="20.500" y="22.500" width="11.500" height="8.500" fill="#2c3f2a"/><rect x="21.5" y="23" width="1.1" height="8" fill="#e9eee6"/><rect x="23.6" y="23" width="1.1" height="8" fill="#e9eee6"/><rect x="25.7" y="23" width="1.1" height="8" fill="#e9eee6"/><rect x="27.8" y="23" width="1.1" height="8" fill="#e9eee6"/><rect x="29.9" y="23" width="1.1" height="8" fill="#e9eee6"/><rect x="1" y="24.5" width="1.2" height="6.5" fill="#b9c4b0"/><rect x="3.4" y="24.5" width="1.2" height="6.5" fill="#b9c4b0"/><rect x="5.8" y="24.5" width="1.2" height="6.5" fill="#b9c4b0"/><rect x="8.2" y="24.5" width="1.2" height="6.5" fill="#b9c4b0"/><ellipse cx="11" cy="7" rx="3.5" ry="2.9" fill="#e2ecee"/><ellipse cx="1.8" cy="13" rx="2.6" ry="3" fill="#d6e2dc"/><ellipse cx="18.3" cy="9.5" rx="3.8" ry="4.7" fill="#3a2a2b"/><ellipse cx="21" cy="15" rx="1.6" ry="4" fill="#40302f"/><ellipse cx="16.8" cy="9.8" rx="1.8" ry="2.600" fill="#eacfc0"/><path d="M13 14 C11 18 10 25 10.500 31 H22 C22 25 21.500 18 20 14 C18 13 15 13 13 14 Z" fill="#dad7ec"/><ellipse cx="15" cy="15.500" rx="2" ry="3" fill="#f0d8d2"/><ellipse cx="25" cy="20.800" rx="2.700" ry="1.600" fill="#d34444"/></g><rect width="32" height="1" fill="#6e6e6e"/></g></svg>
<div class="t" style="left:1061px;top:606px;color:#e6e6e6">图层 5</div>
<svg style="left:993px;top:650px" width="15" height="10" viewBox="0 0 16 11"><path d="M0.500 5.500 C3 1 13 1 15.500 5.500 C13 10 3 10 0.500 5.500 Z" fill="#e6e6e6"/><circle cx="8" cy="5.500" r="2.800" fill="#333"/><circle cx="8" cy="5.500" r="1.300" fill="#e6e6e6"/></svg>
<div class="a" style="left:1021px;top:640px;width:30px;height:29px;background:#fff"></div>
<svg style="left:1018px;top:636px" width="36" height="37" viewBox="0 0 36 37"><path d="M0.600 9 V0.600 H11 M25 0.600 H35.400 V9 M35.400 27 V36.400 H25 M11 36.400 H0.600 V27" stroke="#f0f0f0" stroke-width="1.200" fill="none"/></svg>
<div class="t" style="left:1061px;top:647px;color:#f0f0f0">背景</div>
<svg style="left:1194px;top:648px" width="11" height="14" viewBox="0 0 11 14"><path d="M2.700 6 V4 A2.800 2.800 0 0 1 8.300 4 V6" stroke="#e0e0e0" stroke-width="1.300" fill="none"/><rect x="0.700" y="6" width="9.600" height="7.300" rx="0.800" fill="none" stroke="#e0e0e0" stroke-width="1.300"/><rect x="4.700" y="8.600" width="1.600" height="2.200" fill="#e0e0e0"/></svg>
<!-- layers bottom bar -->
<div class="a" style="left:986px;top:834px;width:250px;height:24px;background:#323232"></div>
<svg style="left:1034px;top:841px" width="15" height="9" viewBox="0 0 15 9"><path d="M6.500 1.500 H4 A3 3 0 0 0 4 7.500 H6.500 M8.500 1.500 H11 A3 3 0 0 1 11 7.500 H8.500 M4.500 4.500 H10.500" stroke="#8a8a8a" stroke-width="1.300" fill="none"/></svg>
<div class="t" style="left:1062px;top:837.500px;font-style:italic;font-size:13px;color:#8a8a8a">fx</div>
<div class="a" style="left:1074px;top:851px;width:2px;height:2px;background:#8a8a8a"></div>
<div class="a" style="left:1088px;top:840px;width:13px;height:10px;background:#cfcfcf"></div>
<div class="a" style="left:1091px;top:842px;width:7px;height:6px;border-radius:50%;background:#2a2a2a"></div>
<!-- flyout menu -->
<div class="a" style="left:41px;top:566px;width:149px;height:118px;background:#2e2e2e;border:1px solid #242424;box-shadow:3px 3px 2px rgba(0,0,0,0.650)"></div>
<div class="a" style="left:43px;top:664px;width:150px;height:19px;background:#484848"></div>
<div class="a" style="left:49px;top:671px;width:4px;height:4px;background:#e8e8e8"></div>
<div class="t" style="left:84px;top:570.5px;color:#f0f0f0;letter-spacing:-0.200px">矩形工具</div><div class="t" style="left:171px;top:570.5px;color:#d0d0d0">U</div><svg style="left:71px;top:578.5px" width="1" height="1"><rect x="-7" y="-5.5" width="14" height="11" fill="#5c5c5c" stroke="#bcbcbc" stroke-width="1.1"/></svg><div class="t" style="left:84px;top:589.5px;color:#f0f0f0;letter-spacing:-0.200px">圆角矩形工具</div><div class="t" style="left:171px;top:589.5px;color:#d0d0d0">U</div><svg style="left:71px;top:597.5px" width="1" height="1"><rect x="-7" y="-5.5" width="14" height="11" rx="3.2" fill="#5c5c5c" stroke="#bcbcbc" stroke-width="1.1"/></svg><div class="t" style="left:84px;top:608.5px;color:#f0f0f0;letter-spacing:-0.200px">椭圆工具</div><div class="t" style="left:171px;top:608.5px;color:#d0d0d0">U</div><svg style="left:71px;top:616.5px" width="1" height="1"><ellipse cx="0" cy="0" rx="7" ry="5.8" fill="#5c5c5c" stroke="#bcbcbc" stroke-width="1.1"/></svg><div class="t" style="left:84px;top:627.5px;color:#f0f0f0;letter-spacing:-0.200px">多边形工具</div><div class="t" style="left:171px;top:627.5px;color:#d0d0d0">U</div><svg style="left:71px;top:635.5px" width="1" height="1"><path d="M-7 0 L-3.6 -6 H3.600 L7 0 L3.600 6 H-3.600 Z" fill="#5c5c5c" stroke="#bcbcbc" stroke-width="1.1"/></svg><div class="t" style="left:84px;top:646.5px;color:#f0f0f0;letter-spacing:-0.200px">直线工具</div><div class="t" style="left:171px;top:646.5px;color:#d0d0d0">U</div><svg style="left:71px;top:654.5px" width="1" height="1"><path d="M-6.500 6.500 L6.500 -6" stroke="#bcbcbc" stroke-width="1.1"/></svg><div class="t" style="left:84px;top:665.5px;color:#f0f0f0;letter-spacing:-0.200px">自定形状工具</div><div class="t" style="left:171px;top:665.5px;color:#d0d0d0">U</div><svg style="left:71px;top:673.5px" width="1" height="1"><g transform="translate(-9.5,-8.500) scale(0.950)"><path d="M5.6 7.7 C4.6 6.8 3 6.4 2.8 4.8 C2.6 3.2 4.2 2.4 5.6 2.8 C6.8 3.1 7.6 3.6 8.6 3.4 C9.8 3.1 10.2 1.2 11.8 0.8 C13.6 0.4 14.4 1.8 14.2 3 C14.1 3.8 13.9 4.2 14.4 4.5 C15.2 4.9 16.6 3.4 18.2 3.8 C19.8 4.2 20 6.2 18.8 7 C17.4 7.9 14.6 8.2 13.8 9.5 C13.2 10.6 15.2 11.6 15.6 13.4 C16 15.4 14.4 16.4 13 16 C11.2 15.5 10.4 13 8 12.8 C6.4 12.7 5.2 15.4 3 15.8 C1 16.2 -0.2 14.600 0.6 13 C1.6 11 5.4 10 5.6 7.7 Z" fill="#5c5c5c" stroke="#bcbcbc" stroke-width="1.2"/></g></svg>
<div class="a" style="left:40.700px;top:660.500px;width:164.500px;height:31.500px;border:3.200px solid #e0393c"></div>
<!-- overlays -->
<!-- watermark -->
<div class="t" id="wm1" style="left:861px;top:798.5px;height:44px;line-height:44px;font-family:'Liberation Sans','Noto Sans CJK SC',sans-serif;font-weight:900;font-size:31.5px;color:#fff;text-shadow:1px 1px 0 #000,2px 2px 1px #000,-1px -1px 1px rgba(0,0,0,.5)">头条</div>
<div class="t" id="wm2" style="left:930px;top:799px;height:44px;line-height:44px;font-family:'Liberation Sans','Noto Sans CJK SC',sans-serif;font-size:31.6px;color:#fff;text-shadow:1px 1px 0 #000,2px 2px 1px #000,-1px -1px 1px rgba(0,0,0,.5)">@教你零基础学设计</div>
<!-- IME widget -->
<div class="a" style="left:1117px;top:840px;width:96px;height:40px;background:#fff;border-radius:7px;border:1px dotted #555"></div>
<div class="t" style="left:1128px;top:842.5px;font-weight:900;font-size:13px;line-height:17px;height:34px;color:#222;white-space:normal;width:14px">中简</div>
<svg style="left:1164px;top:846px" width="42" height="17" viewBox="0 0 42 17"><circle cx="20.100" cy="20.100" r="16.800" fill="#111"/><path d="M5.600 18 C6.500 12.500 11 7.800 16.300 6.200 C18 10 22 14.500 26.500 18 Z" fill="#fff"/></svg>
</div>
</body>
</html>
